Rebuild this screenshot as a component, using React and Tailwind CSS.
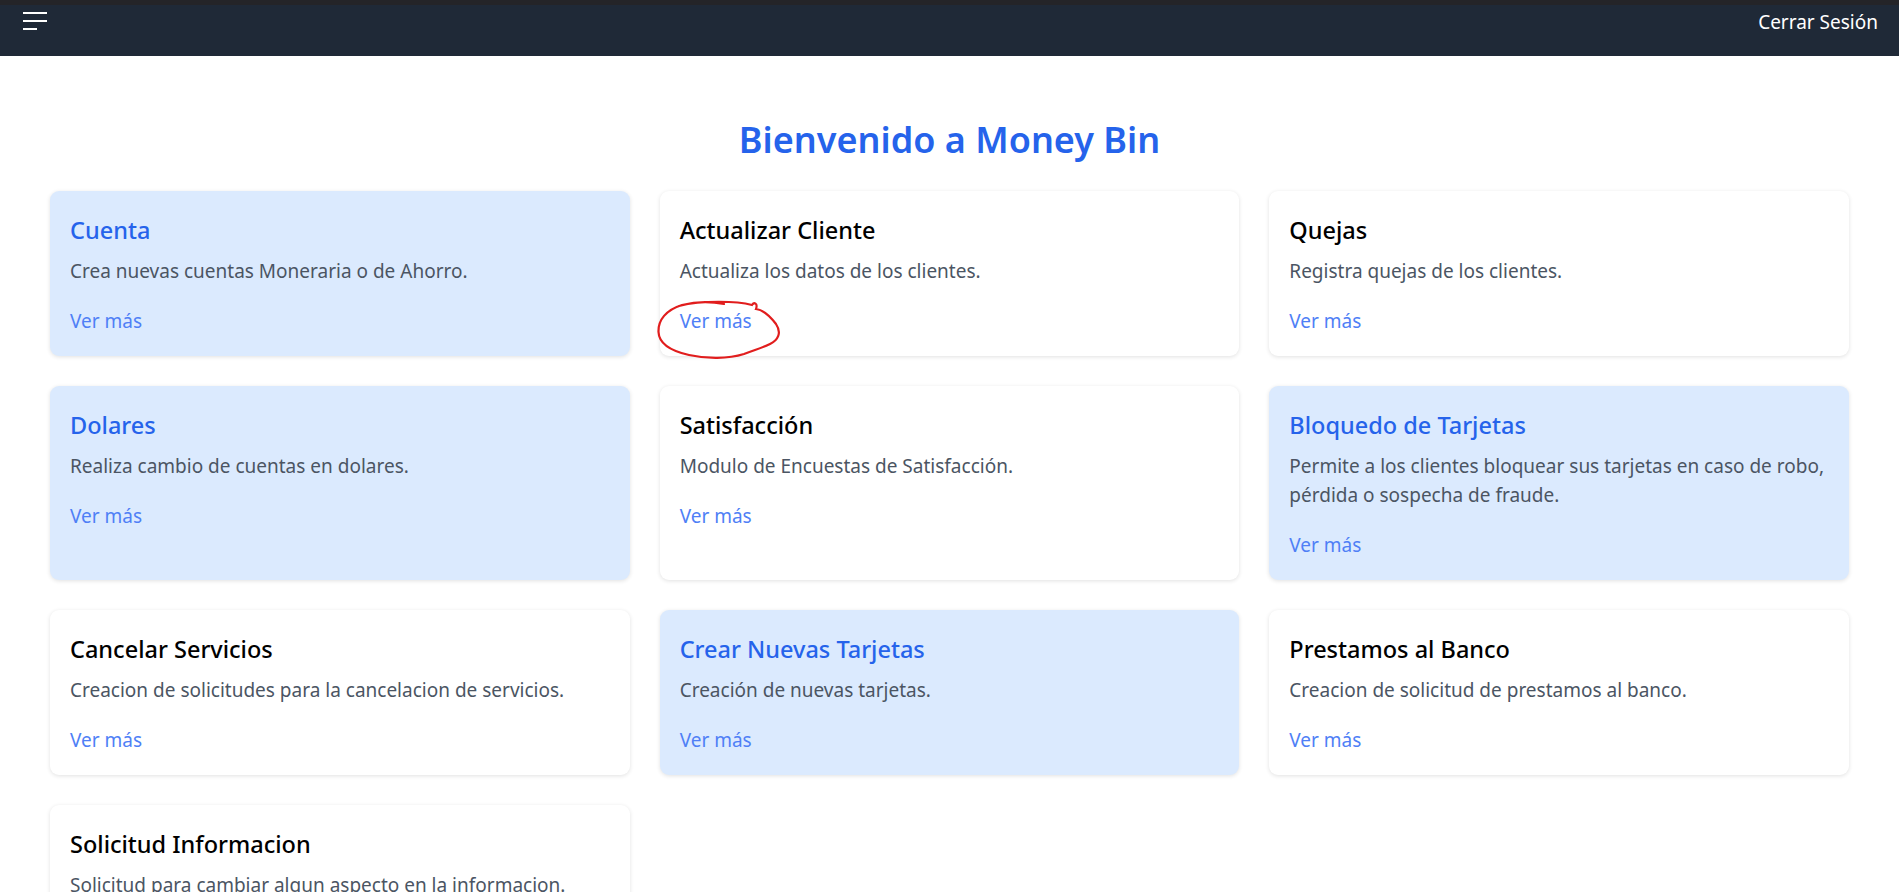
import { useState } from "react";

const cards = [
  { title: "Cuenta", desc: "Crea nuevas cuentas Moneraria o de Ahorro.", active: true },
  { title: "Actualizar Cliente", desc: "Actualiza los datos de los clientes.", circled: true },
  { title: "Quejas", desc: "Registra quejas de los clientes." },
  { title: "Dolares", desc: "Realiza cambio de cuentas en dolares.", active: true },
  { title: "Satisfacción", desc: "Modulo de Encuestas de Satisfacción." },
  {
    title: "Bloquedo de Tarjetas",
    desc: "Permite a los clientes bloquear sus tarjetas en caso de robo, pérdida o sospecha de fraude.",
    active: true,
  },
  { title: "Cancelar Servicios", desc: "Creacion de solicitudes para la cancelacion de servicios." },
  { title: "Crear Nuevas Tarjetas", desc: "Creación de nuevas tarjetas.", active: true },
  { title: "Prestamos al Banco", desc: "Creacion de solicitud de prestamos al banco." },
  { title: "Solicitud Informacion", desc: "Solicitud para cambiar algun aspecto en la informacion." },
];

function Card({ card }) {
  return (
    <div
      className={`relative rounded-[9px] px-[20px] pt-[22px] pb-[20px] shadow-[0_1px_4px_rgba(0,0,0,0.12)] ${card.active ? "bg-[#dbeafe]" : "bg-white"}`}
    >
      <h2
        className={`text-[23.5px] leading-[34px] font-medium ${card.active ? "text-[#2563eb]" : "text-black"}`}
      >
        {card.title}
      </h2>
      <p className="mt-[10px] text-[19px] leading-[29px] text-[#4b5563]">{card.desc}</p>
      <a href="#" className="mt-[21px] block text-[19px] leading-[29px] text-[#4f7ff6]">
        Ver más
      </a>
      {card.circled && (
        <svg
          className="absolute left-[-3px] top-[108px] pointer-events-none"
          width="132"
          height="64"
          viewBox="0 0 132 64"
          fill="none"
        >
          <path
            d="M22 7 C46 1 80 2 95 6 C97 3 101 4 99 10 C107 11 113 17 119 25 C125 34 121 41 113 45 C105 49 97 51 87 55 C71 60 50 60 32 56 C14 52 2 45 1.5 33 C1 21 9 11 25 6 C41 2 57 3 67 5"
            stroke="#e11d1d"
            strokeWidth="2.2"
            strokeLinecap="round"
          />
        </svg>
      )}
    </div>
  );
}

export default function App() {
  const [open, setOpen] = useState(false);

  return (
    <div className="min-h-screen bg-white font-['Noto_Sans',sans-serif]">
      <div className="h-[5px] bg-[#242428]" />
      <nav className="flex h-[51px] items-start justify-between bg-[#1f2937] pl-[23px] pr-[21px]">
        <button onClick={() => setOpen(!open)} className="mt-[7px] flex flex-col gap-[6px]">
          <span className="block h-[2px] w-[24px] bg-white" />
          <span className="block h-[2px] w-[24px] bg-white" />
          <span className="block h-[2px] w-[14px] bg-white" />
        </button>
        <button className="mt-[3px] text-[19px] leading-[29px] text-white">Cerrar Sesión</button>
      </nav>

      <main className="px-[50px] pt-[58px] pb-10">
        <h1 className="mb-[25px] text-center text-[36px] leading-[52px] font-semibold text-[#2563eb]">
          Bienvenido a Money Bin
        </h1>
        <div className="grid grid-cols-3 gap-[30px]">
          {cards.map((c) => (
            <Card key={c.title} card={c} />
          ))}
        </div>
      </main>
    </div>
  );
}
